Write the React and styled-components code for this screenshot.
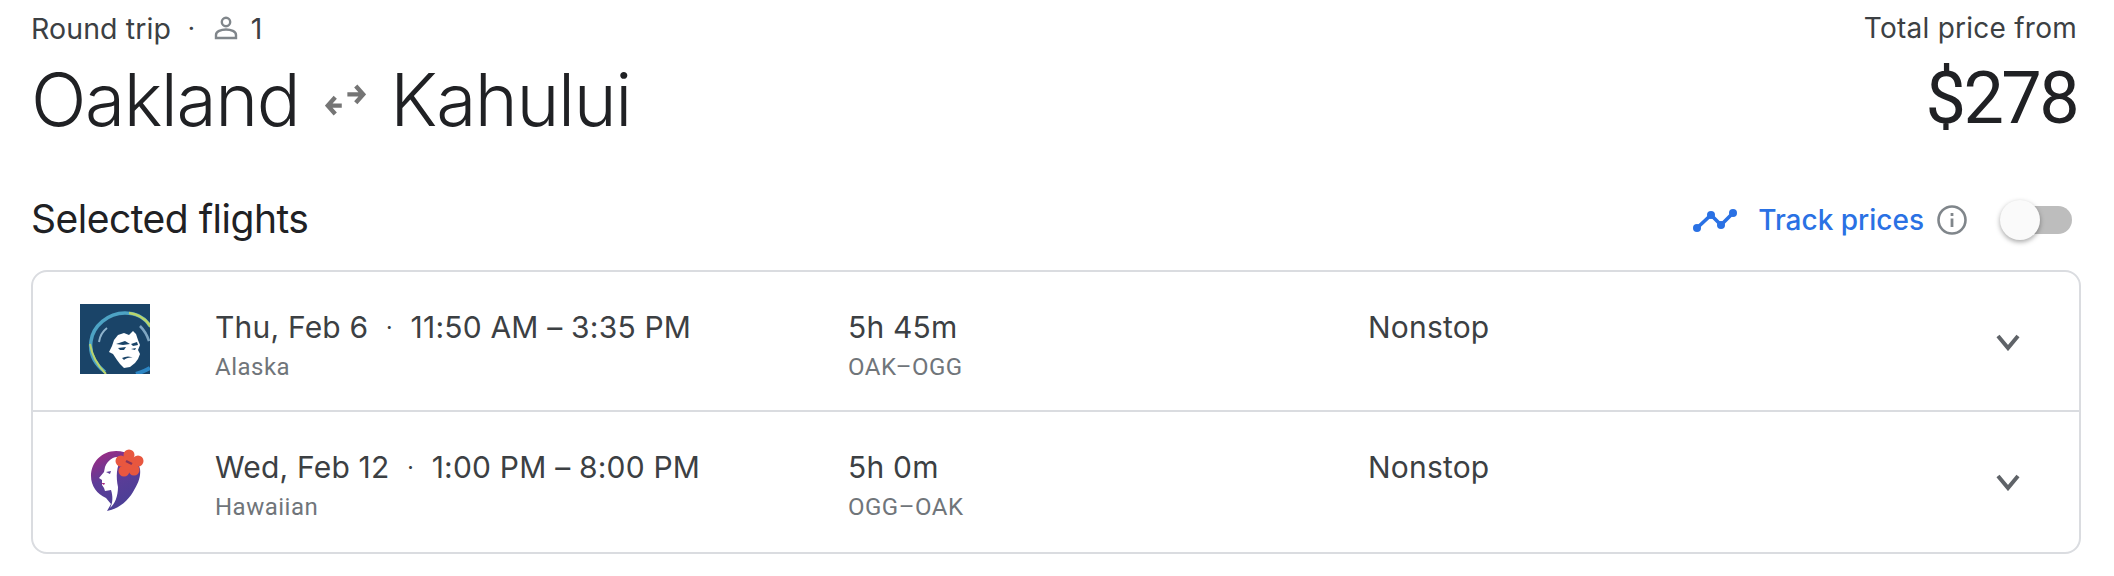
import React from 'react';
import styled, { createGlobalStyle } from 'styled-components';

const GlobalStyle = createGlobalStyle`
  html, body { margin: 0; padding: 0; background: #fff; }
  body { font-family: Inter, "Liberation Sans", sans-serif; color: #202124; }
`;

const Page = styled.div`
  width: 2114px;
  height: 576px;
  box-sizing: border-box;
  padding: 10px 33px 0 31px;
  overflow: hidden;
`;

const Header = styled.div`
  display: flex;
  justify-content: space-between;
  align-items: flex-start;
  height: 155px;
`;

const HeaderCol = styled.div`
  display: flex;
  flex-direction: column;
  align-items: ${({ $end }) => ($end ? 'flex-end' : 'flex-start')};
  padding-right: ${({ $end }) => ($end ? '4px' : '0')};
`;

const TripLine = styled.div`
  display: flex;
  align-items: center;
  height: 36px;
  font-size: 28.5px;
  color: #3c4043;
  letter-spacing: 0.1px;
`;

const Dot = styled.span`
  margin: 0 ${({ $gap }) => $gap || '17px'};
  color: #3c4043;
  font-weight: 700;
  font-size: ${({ $size }) => $size || '20px'};
`;

const Count = styled.span`
  margin-left: 11px;
`;

const Route = styled.div`
  display: flex;
  align-items: center;
  margin-top: 7px;
  height: 92px;
  font-size: 73px;
  font-weight: 350;
  letter-spacing: -1.4px;
`;

const SwapIcon = styled.svg`
  width: 41px;
  height: 36px;
  margin: 2px 24px 0 26px;
`;

const TotalLabel = styled.div`
  height: 36px;
  line-height: 36px;
  font-size: 28px;
  color: #3c4043;
  letter-spacing: 0.25px;
`;

const Price = styled.div`
  margin-top: 7px;
  height: 92px;
  line-height: 92px;
  font-family: Roboto, "Liberation Sans", sans-serif;
  font-size: 72px;
  font-weight: 400;
  letter-spacing: -2.6px;
`;

const SectionBar = styled.div`
  display: flex;
  justify-content: space-between;
  align-items: center;
  height: 106px;
`;

const SectionTitle = styled.h2`
  margin: 0;
  font-size: 39px;
  font-weight: 400;
  letter-spacing: -0.5px;
`;

const TrackGroup = styled.div`
  display: flex;
  align-items: center;
  margin: 3px 9px 0 0;
`;

const TrackLabel = styled.span`
  margin: 0 13px 0 21px;
  font-size: 28px;
  font-weight: 500;
  color: #2a71e4;
`;

const ToggleTrack = styled.div`
  position: relative;
  width: 69px;
  height: 28px;
  margin-left: 36px;
  border-radius: 14px;
  background: #bdbdbd;
`;

const ToggleKnob = styled.div`
  position: absolute;
  left: -3px;
  top: -6px;
  width: 40px;
  height: 40px;
  border-radius: 50%;
  background: #fafafa;
  box-shadow: 0 2px 5px rgba(0, 0, 0, 0.35);
`;

const Card = styled.div`
  border: 2px solid #dadce0;
  border-radius: 16px;
  margin-top: -1px;
`;

const Row = styled.div`
  display: grid;
  grid-template-columns: 182px 633px 520px 1fr 85px;
  height: ${({ $height }) => $height};
  box-sizing: border-box;
  border-top: ${({ $divided }) => ($divided ? '2px solid #dadce0' : 'none')};
`;

const LogoCell = styled.div`
  padding: ${({ $top }) => $top} 0 0 47px;
`;

const Cell = styled.div`
  padding-top: ${({ $top }) => $top || '36px'};
`;

const MainText = styled.div`
  display: flex;
  align-items: center;
  height: 36px;
  font-size: 30px;
  color: #3c4043;
  letter-spacing: 0.2px;
  white-space: nowrap;
`;

const SubText = styled.div`
  margin-top: 7px;
  height: 30px;
  line-height: 30px;
  font-family: Roboto, "Liberation Sans", sans-serif;
  font-size: 24px;
  color: #70757a;
  letter-spacing: 0.5px;
`;

const Chevron = styled.svg`
  width: 28px;
  height: 18px;
  margin-top: ${({ $top }) => $top};
`;

function AlaskaLogo() {
  return (
    <svg width="70" height="70" viewBox="0 0 70 70">
      <defs>
        <clipPath id="alaskaClip"><rect width="70" height="70" /></clipPath>
      </defs>
      <rect width="70" height="70" fill="#1a4468" />
      <g clipPath="url(#alaskaClip)" fill="none">
        <path d="M25 68C15 60 9 50 11 37C13 22 28 9 45 9C56 9 65 14 70 22" stroke="#4da3c4" strokeWidth="3.5" />
        <path d="M49 9C58 10 66 15 71 23" stroke="#b9d46c" strokeWidth="2.5" />
        <path d="M10 40C12 52 18 62 26 70" stroke="#b9d46c" strokeWidth="2" />
        <path d="M19 38C20 31 23 27 27 24" stroke="#8fb4cd" strokeWidth="2" />
        <path d="M60 22C64 26 67 31 69 37" stroke="#7fa6c2" strokeWidth="2.5" />
        <path d="M56 70C62 68 67 66 70 64" stroke="#2d86c4" strokeWidth="4" />
      </g>
      <path d="M38 31L44 29L49 31L53 27L56 30L58 36L60 41L58 46L60 50L58 55L55 59L50 63L44 64L40 60L37 56L33 50L29 48L32 42L34 36Z" fill="#fff" />
      <path d="M36 40L45 37L50 40L43 41ZM51 40L57 38L58 41L53 42ZM38 44L46 43L44 46L40 46ZM51 45L56 44L55 46ZM42 54C46 52 50 52 54 54C50 53 46 54 44 56Z" fill="#1a4468" />
    </svg>
  );
}

function HawaiianLogo() {
  return (
    <svg width="70" height="70" viewBox="0 0 70 70">
      <defs>
        <linearGradient id="hawaiianFill" x1="0" y1="0" x2="0.4" y2="1">
          <stop offset="0" stopColor="#a8287f" />
          <stop offset="0.5" stopColor="#5e3c98" />
          <stop offset="1" stopColor="#4b3f96" />
        </linearGradient>
      </defs>
      <path d="M36 4C22 4 11 15 11 29C11 39 17 47 26 51L31 57L27 64C38 62 47 55 53 45C58 37 61 30 60 22C58 11 48 4 36 4Z" fill="url(#hawaiianFill)" />
      <path d="M42 10C35 9 28 12 25 20L24 25L19 31L22 33L22 38L24 41L25 44L31 43C33 49 33 56 30 61C35 57 38 49 38 40C36 30 36 20 42 10Z" fill="#fff" />
      <path d="M26 25L31 24L30 27Z" fill="#5e3c98" />
      <path d="M21 36L25 36L24 38Z" fill="#a8287f" />
      <g fill="#e8573f">
        <circle cx="49" cy="8" r="5.5" />
        <circle cx="58" cy="14" r="5.5" />
        <circle cx="54" cy="23" r="5.5" />
        <circle cx="44" cy="24" r="5.5" />
        <circle cx="41" cy="14" r="5.5" />
        <circle cx="49" cy="16" r="7" />
      </g>
      <path d="M46 14L52 17" stroke="#8a3358" strokeWidth="2.5" />
    </svg>
  );
}

const flights = [
  { date: 'Thu, Feb 6', time: '11:50 AM – 3:35 PM', airline: 'Alaska', dur: '5h 45m', route: 'OAK–OGG', Logo: AlaskaLogo, height: '138px' },
  { date: 'Wed, Feb 12', time: '1:00 PM – 8:00 PM', airline: 'Hawaiian', dur: '5h 0m', route: 'OGG–OAK', Logo: HawaiianLogo, height: '142px' },
];

export default function App() {
  return (
    <Page>
      <GlobalStyle />
      <Header>
        <HeaderCol>
          <TripLine>
            Round trip
            <Dot>·</Dot>
            <svg width="28" height="28" viewBox="0 0 28 28" fill="none" stroke="#80868b" strokeWidth="2.4">
              <circle cx="14" cy="8" r="4.2" />
              <path d="M4 24V21C4 17.5 9 15.5 14 15.5S24 17.5 24 21V24Z" />
            </svg>
            <Count>1</Count>
          </TripLine>
          <Route>
            Oakland
            <SwapIcon viewBox="0 0 44 36" fill="none" stroke="#757575" strokeWidth="4.6">
              <path d="M18 24H3M11 15L3 24L11 33" />
              <path d="M24 12H41M33 3L41 12L33 21" />
            </SwapIcon>
            Kahului
          </Route>
        </HeaderCol>
        <HeaderCol $end>
          <TotalLabel>Total price from</TotalLabel>
          <Price>$278</Price>
        </HeaderCol>
      </Header>
      <SectionBar>
        <SectionTitle>Selected flights</SectionTitle>
        <TrackGroup>
          <svg width="44" height="24" viewBox="0 0 44 24" fill="none">
            <path d="M4 20L18 7L28 17L40 5" stroke="#2a71e4" strokeWidth="3.6" />
            <circle cx="4" cy="20" r="4" fill="#2a71e4" />
            <circle cx="18" cy="7" r="4" fill="#2a71e4" />
            <circle cx="28" cy="17" r="4" fill="#2a71e4" />
            <circle cx="40" cy="5" r="4" fill="#2a71e4" />
          </svg>
          <TrackLabel>Track prices</TrackLabel>
          <svg width="30" height="30" viewBox="0 0 30 30" fill="none">
            <circle cx="15" cy="15" r="13.5" stroke="#80868b" strokeWidth="2.6" />
            <path d="M15 13.5V22" stroke="#80868b" strokeWidth="2.8" />
            <path d="M15 8V11" stroke="#80868b" strokeWidth="2.8" />
          </svg>
          <ToggleTrack>
            <ToggleKnob />
          </ToggleTrack>
        </TrackGroup>
      </SectionBar>
      <Card>
        {flights.map(({ date, time, airline, dur, route, Logo, height }, i) => (
          <Row key={airline} $height={height} $divided={i > 0}>
            <LogoCell $top={i > 0 ? '35px' : '32px'}>
              <Logo />
            </LogoCell>
            <Cell $top="37px">
              <MainText>
                {date}
                <Dot $gap="18px" $size="18px">·</Dot>
                {time}
              </MainText>
              <SubText>{airline}</SubText>
            </Cell>
            <Cell $top="37px">
              <MainText>{dur}</MainText>
              <SubText>{route}</SubText>
            </Cell>
            <Cell $top="37px">
              <MainText>Nonstop</MainText>
            </Cell>
            <Cell $top="0">
              <Chevron $top={i > 0 ? '61px' : '61px'} viewBox="0 0 28 18" fill="none" stroke="#5f6368" strokeWidth="4">
                <path d="M4 3L14 15L24 3" />
              </Chevron>
            </Cell>
          </Row>
        ))}
      </Card>
    </Page>
  );
}
